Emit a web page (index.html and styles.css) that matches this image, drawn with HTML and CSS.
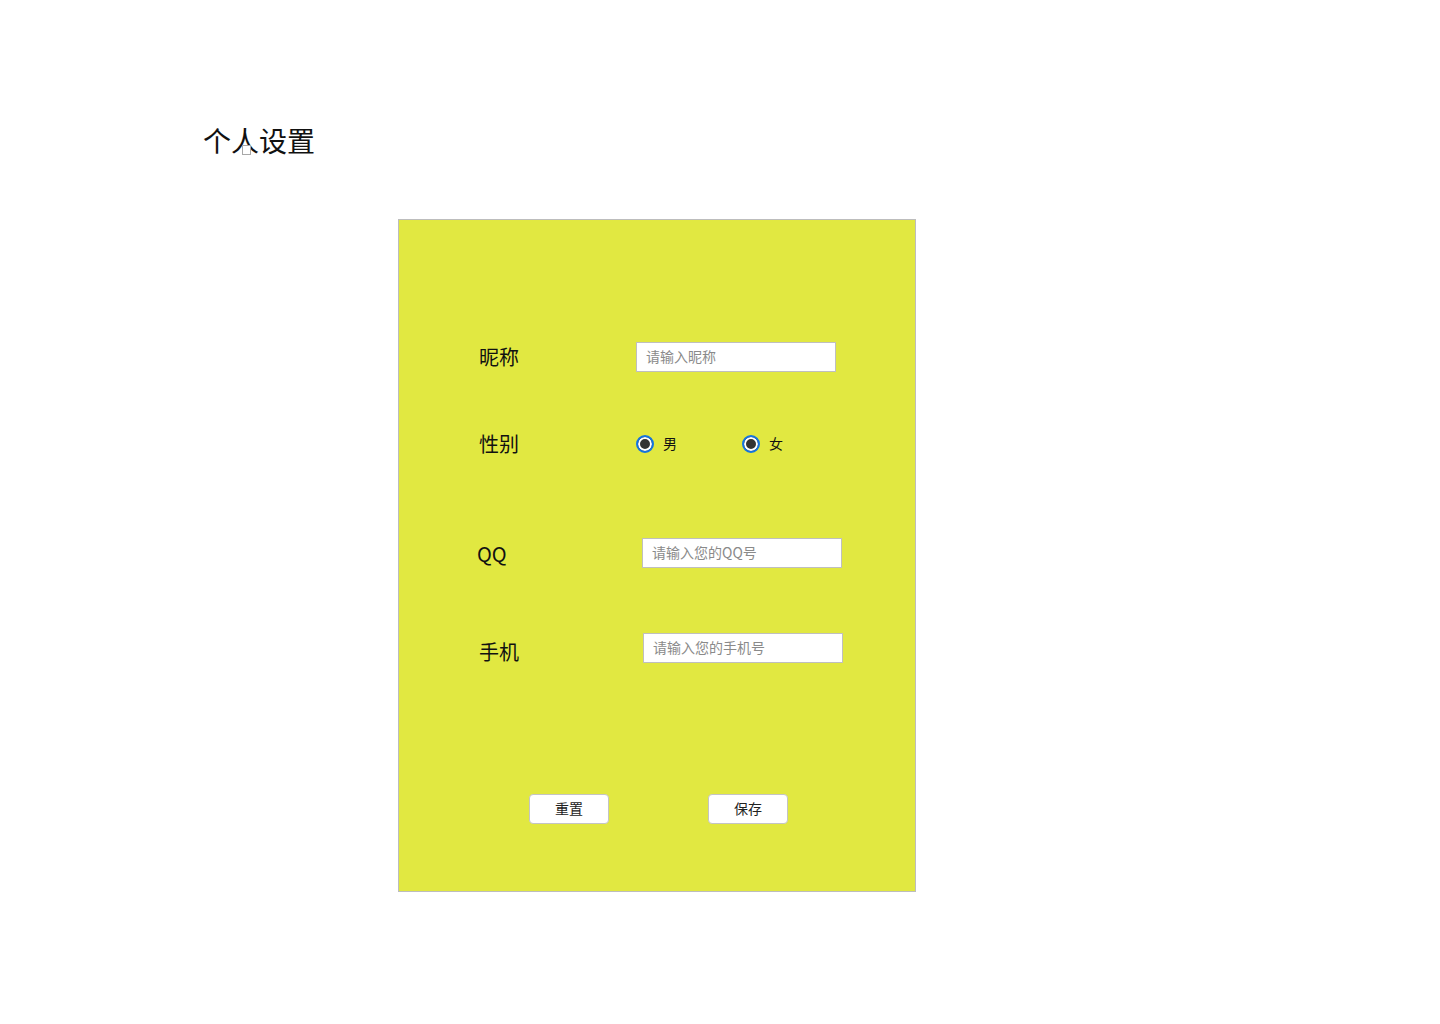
FILE: index.html
```html
<!DOCTYPE html>
<html lang="zh">
<head>
<meta charset="utf-8">
<title>个人设置</title>
<link rel="stylesheet" href="styles.css">
</head>
<body>
<header class="title-wrap">
  <h1 class="title">个人设置</h1>
  <span class="broken-img" aria-hidden="true"></span>
</header>
<form class="panel">
  <div class="row row-nick">
    <label class="label">昵称</label>
    <input class="field" type="text" placeholder="请输入昵称">
  </div>
  <div class="row row-sex">
    <label class="label">性别</label>
    <div class="radios">
      <label class="radio-item"><input class="radio" type="radio" name="s1" checked><span class="radio-text">男</span></label>
      <label class="radio-item"><input class="radio" type="radio" name="s2" checked><span class="radio-text">女</span></label>
    </div>
  </div>
  <div class="row row-qq">
    <label class="label">QQ</label>
    <input class="field" type="text" placeholder="请输入您的QQ号">
  </div>
  <div class="row row-phone">
    <label class="label">手机</label>
    <input class="field" type="text" placeholder="请输入您的手机号">
  </div>
  <div class="buttons">
    <button type="button" class="btn">重置</button>
    <button type="button" class="btn">保存</button>
  </div>
</form>
</body>
</html>
```
FILE: styles.css
```css
* { box-sizing: border-box; }
html, body { margin: 0; padding: 0; background: #fff; }
body {
  font-family: "Noto Sans CJK SC", "Noto Sans", sans-serif;
  color: #111;
  width: 1440px;
  height: 1024px;
  overflow: hidden;
}
.title-wrap {
  position: relative;
  padding: 120px 0 0 203px;
  height: 161px;
}
.title {
  margin: 0;
  font-size: 28px;
  font-weight: 400;
  line-height: 40px;
  color: #111;
}
.broken-img {
  position: absolute;
  left: 242px;
  top: 145px;
  width: 9px;
  height: 10px;
  border: 1px solid #a8a8a8;
  background: #fff;
}
.panel {
  margin: 58px 0 0 398px;
  width: 518px;
  height: 673px;
  background: #e1e841;
  border: 1px solid #bdbdbd;
  padding-top: 122px;
}
.row {
  display: flex;
  align-items: center;
  height: 30px;
}
.label {
  font-size: 20px;
  line-height: 30px;
  width: 237px;
  padding-left: 80px;
  color: #111;
  position: relative;
}
.row-sex { margin-top: 57px; }
.row-qq { margin-top: 79px; }
.row-phone { margin-top: 65px; }
.row-qq .label { padding-left: 78px; width: 243px; top: 1px; }
.row-phone .label { width: 244px; top: 4px; }
.field {
  width: 200px;
  height: 30px;
  border: 1px solid #bfbfbf;
  background: #fff;
  padding: 0 0 2px 9px;
  font-family: inherit;
  font-size: 14px;
  color: #333;
  outline: none;
}
.field::placeholder { color: #8a8a8a; }
.radios {
  display: flex;
  align-items: center;
  gap: 65px;
}
.radio-item {
  display: flex;
  align-items: center;
  gap: 9px;
  font-size: 14px;
  color: #111;
}
.radio-text { position: relative; top: -1px; }
.radio {
  -webkit-appearance: none;
  appearance: none;
  margin: 0;
  width: 18px;
  height: 18px;
  border-radius: 50%;
  border: 2px solid #1474e0;
  background: #333;
  box-shadow: inset 0 0 0 2px #fff;
}
.buttons {
  display: flex;
  gap: 99px;
  margin-top: 131px;
  padding-left: 130px;
}
.btn {
  width: 80px;
  height: 30px;
  background: #fff;
  border: 1px solid #c4c4c4;
  border-radius: 4px;
  font-family: inherit;
  font-size: 14px;
  color: #222;
  padding: 0 0 2px;
}
```
